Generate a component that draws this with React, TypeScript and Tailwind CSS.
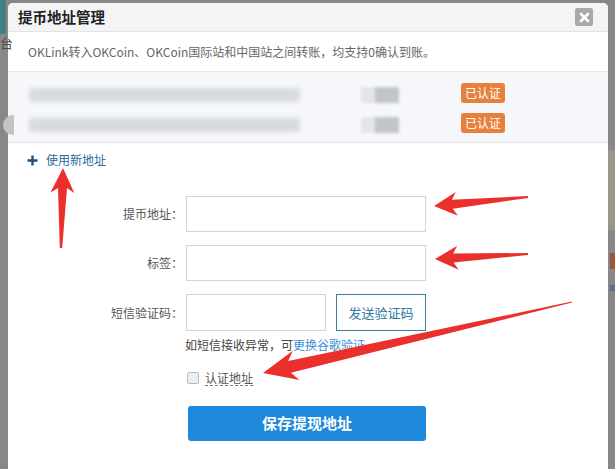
import React from 'react';

type Pt = [number, number];

interface ArrowProps {
  tip: Pt;
  tail: Pt;
  headLen: number;
  headHalf: number;
  shaftHalf: number;
  tailHalf: number;
}

// tapered red annotation arrow, tip -> head, then a shaft that thins out to the tail
const Arrow: React.FC<ArrowProps> = ({ tip, tail, headLen, headHalf, shaftHalf, tailHalf }) => {
  const dx = tail[0] - tip[0];
  const dy = tail[1] - tip[1];
  const len = Math.hypot(dx, dy);
  const ux = dx / len;
  const uy = dy / len;
  const px = -uy;
  const py = ux;
  const bx = tip[0] + ux * headLen;
  const by = tip[1] + uy * headLen;
  const nx = tip[0] + ux * (headLen * 0.8);
  const ny = tip[1] + uy * (headLen * 0.8);
  const pts: Pt[] = [
    tip,
    [bx + px * headHalf, by + py * headHalf],
    [nx + px * shaftHalf, ny + py * shaftHalf],
    [tail[0] + px * tailHalf, tail[1] + py * tailHalf],
    [tail[0] - px * tailHalf, tail[1] - py * tailHalf],
    [nx - px * shaftHalf, ny - py * shaftHalf],
    [bx - px * headHalf, by - py * headHalf],
  ];
  return (
    <polygon
      points={pts.map((p) => `${p[0].toFixed(1)},${p[1].toFixed(1)}`).join(' ')}
      fill="#ea2f2c"
    />
  );
};

const addresses = [0, 1];

const App: React.FC = () => {
  return (
    <div className="relative w-[615px] h-[469px] overflow-hidden bg-[#888888] font-['Noto_Sans_CJK_SC',sans-serif]">
      {/* page behind the overlay */}
      <div className="absolute left-0 top-0 w-[6px] h-[34px] bg-[#3f7f86]" />
      <div className="absolute left-0 top-[36px] text-[13px] text-[#4a4a4a] leading-none">台</div>
      <div className="absolute right-0 top-[150px] w-[7px] h-[80px] bg-[#9a978a]" />
      <div className="absolute right-0 top-[253px] w-[5px] h-[16px] bg-[#a0553a]" />
      <div className="absolute right-0 top-[285px] w-[5px] h-[6px] bg-[#5c6d8c]" />

      <div className="pl-[8px] pt-[3px]">
        <div className="w-[600px] h-[466px] bg-white rounded-t-[5px] overflow-hidden">
          {/* header */}
          <div className="h-[29px] bg-[#f3f4f6] border-b border-[#e3e3e3] flex items-center justify-between pl-[10px] pr-[15px]">
            <span className="text-[14.5px] font-bold text-[#222]">提币地址管理</span>
            <button className="w-[18px] h-[18px] bg-[#a9a9a9] rounded-[2px] flex items-center justify-center">
              <svg width="11" height="11" viewBox="0 0 11 11">
                <path d="M2 2 L9 9 M9 2 L2 9" stroke="#fff" strokeWidth="2.6" strokeLinecap="round" />
              </svg>
            </button>
          </div>

          {/* notice */}
          <div className="h-[40px] flex items-center pl-[20px] border-b border-[#e6e6e6] text-[12px] text-[#666]">
            OKLink转入OKCoin、OKCoin国际站和中国站之间转账，均支持0确认到账。
          </div>

          {/* saved addresses */}
          <div className="bg-[#f6f7fb] border-b border-[#e4e6ea] pt-[6px] pb-[4px] pl-[21px]">
            {addresses.map((i) => (
              <div key={i} className="h-[30px] flex items-center">
                <div className="w-[271px] h-[14px] mt-[4px] bg-[#d8dae1] rounded-[3px] blur-[2px]" />
                <div className="ml-[61px] w-[45px] h-[16px] mt-[4px] flex blur-[1.5px]">
                  <div className="w-[14px] bg-[#e4e5ea]" />
                  <div className="w-[24px] bg-[#c2c4cc]" />
                </div>
                <span className="ml-[55px] h-[20px] px-[4px] rounded-[3px] bg-[#e6803c] text-white text-[12px] leading-[20px]">
                  已认证
                </span>
              </div>
            ))}
          </div>

          {/* new address form */}
          <div className="pt-[9px]">
            <div className="flex items-center h-[16px] pl-[19px] text-[12px] text-[#2b6a9a]">
              <svg width="11" height="11" viewBox="0 0 11 11" className="mr-[8px]">
                <path d="M5.5 0.5 V10.5 M0.5 5.5 H10.5" stroke="#1f4f7a" strokeWidth="2.4" />
              </svg>
              使用新地址
            </div>

            <div className="mt-[28px] flex flex-col gap-[13px]">
              <div className="flex items-center">
                <label className="w-[178px] pr-[3px] text-right text-[12px] text-[#555]">提币地址：</label>
                <input className="w-[240px] h-[36px] border border-[#d3d3d3] outline-none" />
              </div>
              <div className="flex items-center">
                <label className="w-[178px] pr-[3px] text-right text-[12px] text-[#555]">标签：</label>
                <input className="w-[240px] h-[36px] border border-[#d3d3d3] outline-none" />
              </div>
              <div className="flex items-center">
                <label className="w-[178px] pr-[3px] text-right text-[12px] text-[#555]">短信验证码：</label>
                <input className="w-[140px] h-[37px] border border-[#d3d3d3] outline-none" />
                <button className="ml-[10px] w-[90px] h-[37px] border border-[#3b7f9b] text-[13px] text-[#2f78a0]">
                  发送验证码
                </button>
              </div>
            </div>

            <div className="ml-[177px] mt-[7px] text-[12px] leading-[14px] text-[#444]">
              如短信接收异常，可<span className="text-[#3b8fd2]">更换谷歌验证</span>
            </div>

            <div className="ml-[179px] mt-[19px] flex items-center h-[14px]">
              <span className="w-[12px] h-[12px] rounded-[2px] border border-[#b9b9b9] bg-[#eeeeee]" />
              <span className="ml-[6px] text-[12px] leading-[14px] text-[#555] border-b border-dashed border-[#777]">
                认证地址
              </span>
            </div>

            <button className="ml-[180px] mt-[21px] w-[238px] h-[35px] rounded-[3px] bg-[#1e88da] text-white text-[15px] font-bold">
              保存提现地址
            </button>
          </div>
        </div>
      </div>

      {/* carousel tab of the page showing over the dialog edge */}
      <div className="absolute left-[3px] top-[115px] w-[11px] h-[20px] rounded-l-full bg-[#c4c4c4]" />

      {/* red annotations */}
      <svg className="absolute inset-0 pointer-events-none" width="615" height="469" viewBox="0 0 615 469">
        <Arrow tip={[63, 168]} tail={[61, 248]} headLen={25} headHalf={12} shaftHalf={4.5} tailHalf={1.2} />
        <Arrow tip={[434, 206]} tail={[528, 197]} headLen={23} headHalf={12} shaftHalf={4.5} tailHalf={1} />
        <Arrow tip={[435, 259]} tail={[528, 254]} headLen={23} headHalf={12} shaftHalf={4.5} tailHalf={1} />
        <Arrow tip={[263, 373]} tail={[572, 302]} headLen={34} headHalf={15} shaftHalf={6} tailHalf={0.4} />
      </svg>
    </div>
  );
};

export default App;
